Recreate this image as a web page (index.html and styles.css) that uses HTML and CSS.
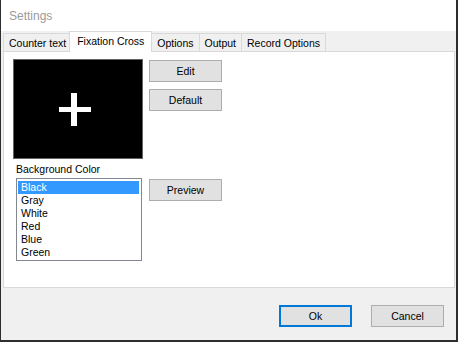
FILE: index.html
```html
<!DOCTYPE html>
<html lang="en">
<head>
    <meta charset="UTF-8">
    <title>Settings</title>
    <link rel="stylesheet" href="styles.css">
</head>
<body>
    <div class="window">
        <div class="titlebar">Settings</div>

        <div class="content">
            <!-- tab headers -->
            <div class="tabs">
                <div class="tab">Counter text</div>
                <div class="tab active">Fixation Cross</div>
                <div class="tab">Options</div>
                <div class="tab">Output</div>
                <div class="tab">Record Options</div>
            </div>

            <div class="panel">
                <div class="top-row">
                    <div class="cross-box">
                        <svg width="128" height="98" viewBox="0 0 128 98">
                            <rect x="45" y="47" width="32" height="5" fill="#fff"/>
                            <rect x="57" y="33" width="6" height="33" fill="#fff"/>
                        </svg>
                    </div>
                    <div class="btn-col">
                        <button class="btn">Edit</button>
                        <button class="btn">Default</button>
                    </div>
                </div>

                <div class="bottom-row">
                    <div class="color-group">
                        <div class="label">Background Color</div>
                        <ul class="listbox">
                            <li class="item selected">Black</li>
                            <li class="item">Gray</li>
                            <li class="item">White</li>
                            <li class="item">Red</li>
                            <li class="item">Blue</li>
                            <li class="item">Green</li>
                        </ul>
                    </div>
                    <button class="btn preview">Preview</button>
                </div>
            </div>

            <div class="footer">
                <button class="btn ok">Ok</button>
                <button class="btn">Cancel</button>
            </div>
        </div>
    </div>
</body>
</html>
```

FILE: styles.css
```css
body {
    margin: 0;
    padding: 0;
    font-family: 'Liberation Sans', Arial, sans-serif;
    font-size: 10.5px;
    color: #000;
}

.window {
    width: 458px;
    height: 342px;
    box-sizing: border-box;
    background-color: #f0f0f0;
    border-left: 1px solid #2e2e2e;
    border-right: 2px solid #2e2e2e;
    border-bottom: 2px solid #2e2e2e;
}

.titlebar {
    height: 31px;
    line-height: 32px;
    padding-left: 8px;
    background-color: #fff;
    color: #9b9b9b;
    font-size: 12px;
}

.content {
    padding: 0 1px 0 2px;
}

.tabs {
    display: flex;
    align-items: flex-end;
    height: 20px;
}

.tab {
    height: 18px;
    line-height: 18px;
    box-sizing: border-box;
    padding: 0 5px;
    margin-right: -1px;
    border: 1px solid #d9d9d9;
    border-bottom: none;
    background-color: #f0f0f0;
    white-space: nowrap;
}

.tab.active {
    position: relative;
    z-index: 1;
    height: 21px;
    line-height: 18px;
    margin: 0 -1px -1px -2px;
    padding: 0 7px;
    background-color: #fff;
}

.panel {
    height: 237px;
    box-sizing: border-box;
    border: 1px solid #d9d9d9;
    background-color: #fff;
    padding: 7px 0 0 9px;
}

.top-row {
    display: flex;
}

.cross-box {
    width: 130px;
    height: 100px;
    box-sizing: border-box;
    border: 1px solid #646464;
    background-color: #000;
}

.cross-box svg {
    display: block;
}

.btn-col {
    display: flex;
    flex-direction: column;
    gap: 7px;
    margin: 1px 0 0 6px;
}

.btn {
    width: 73px;
    height: 22px;
    box-sizing: border-box;
    padding: 0;
    border: 1px solid #adadad;
    background-color: #e1e1e1;
    font-family: inherit;
    font-size: 10.5px;
    color: #000;
}

.btn.ok {
    border: 2px solid #0078d7;
}

.bottom-row {
    display: flex;
    gap: 7px;
    padding-left: 3px;
}

.label {
    margin: 4px 0 2px;
    line-height: 13px;
}

.listbox {
    width: 126px;
    height: 83px;
    box-sizing: border-box;
    margin: 0;
    padding: 2px 2px 0 1px;
    list-style: none;
    border: 1px solid #828790;
}

.item {
    height: 13px;
    line-height: 13px;
    padding-left: 3px;
}

.item.selected {
    background-color: #3399ff;
    color: #fff;
}

.preview {
    margin-top: 20px;
}

.footer {
    display: flex;
    justify-content: flex-end;
    gap: 19px;
    padding: 17px 11px 0 0;
}
```
